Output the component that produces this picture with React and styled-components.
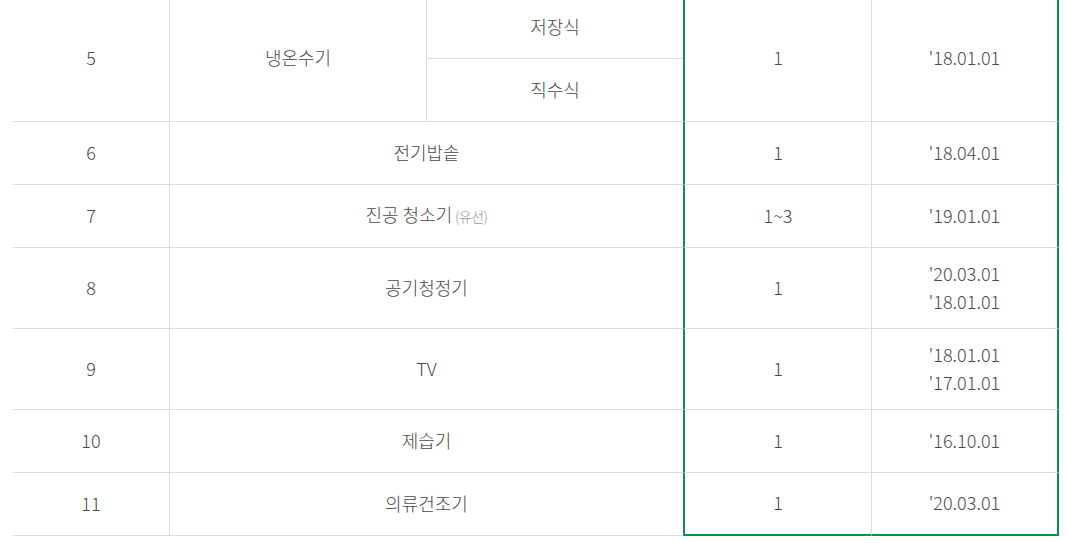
import React from 'react'
import styled, { createGlobalStyle } from 'styled-components'

const GlobalStyle = createGlobalStyle`
  html, body {
    margin: 0;
    padding: 0;
    background: #fff;
    overflow: hidden;
  }
  body {
    font-family: 'Noto Sans CJK KR', 'Noto Sans', sans-serif;
  }
`

const green = '#109047'
const line = '#dcdcdc'

const Page = styled.div`
  width: 1066px;
  height: 543px;
  padding-left: 13px;
  box-sizing: border-box;
  overflow: hidden;
`

const Table = styled.table`
  width: 1046px;
  margin-top: -4px;
  table-layout: fixed;
  border-collapse: separate;
  border-spacing: 0;
  color: #4a4a4a;
  font-size: 18px;
  font-weight: 300;
`

const Row = styled.tr`
  height: ${(p) => p.$h}px;
`

const Cell = styled.td`
  box-sizing: border-box;
  padding: 0 0 3px;
  text-align: center;
  vertical-align: middle;
  line-height: 28px;
  border-bottom: ${(p) => (p.$last && p.$box ? `2px solid ${green}` : `1px solid ${line}`)};
  border-left: ${(p) =>
    p.$box === 'left' ? `2px solid ${green}` : p.$first ? 'none' : `1px solid ${line}`};
  border-right: ${(p) => (p.$box === 'right' ? `2px solid ${green}` : 'none')};
`

const Note = styled.span`
  font-size: 14px;
  color: #999;
  letter-spacing: -0.5px;
`

const rows = [
  { no: 6, name: '전기밥솥', qty: '1', dates: ["'18.04.01"], h: 63 },
  { no: 7, name: '진공 청소기', note: '(유선)', qty: '1~3', dates: ["'19.01.01"], h: 63 },
  { no: 8, name: '공기청정기', qty: '1', dates: ["'20.03.01", "'18.01.01"], h: 81 },
  { no: 9, name: 'TV', qty: '1', dates: ["'18.01.01", "'17.01.01"], h: 81 },
  { no: 10, name: '제습기', qty: '1', dates: ["'16.10.01"], h: 63 },
  { no: 11, name: '의류건조기', qty: '1', dates: ["'20.03.01"], h: 63 },
]

export default function App() {
  return (
    <Page>
      <GlobalStyle />
      <Table>
        <colgroup>
          <col style={{ width: 156 }} />
          <col style={{ width: 257 }} />
          <col style={{ width: 257 }} />
          <col style={{ width: 188 }} />
          <col style={{ width: 188 }} />
        </colgroup>
        <tbody>
          <Row $h={63}>
            <Cell $first rowSpan={2}>5</Cell>
            <Cell rowSpan={2}>냉온수기</Cell>
            <Cell>저장식</Cell>
            <Cell $box="left" rowSpan={2}>1</Cell>
            <Cell $box="right" rowSpan={2}>'18.01.01</Cell>
          </Row>
          <Row $h={63}>
            <Cell>직수식</Cell>
          </Row>
          {rows.map((r, i) => {
            const last = i === rows.length - 1
            return (
              <Row key={r.no} $h={r.h}>
                <Cell $first>{r.no}</Cell>
                <Cell colSpan={2}>
                  {r.name}
                  {r.note && <Note> {r.note}</Note>}
                </Cell>
                <Cell $box="left" $last={last}>{r.qty}</Cell>
                <Cell $box="right" $last={last}>
                  {r.dates.map((d) => (
                    <div key={d}>{d}</div>
                  ))}
                </Cell>
              </Row>
            )
          })}
        </tbody>
      </Table>
    </Page>
  )
}
